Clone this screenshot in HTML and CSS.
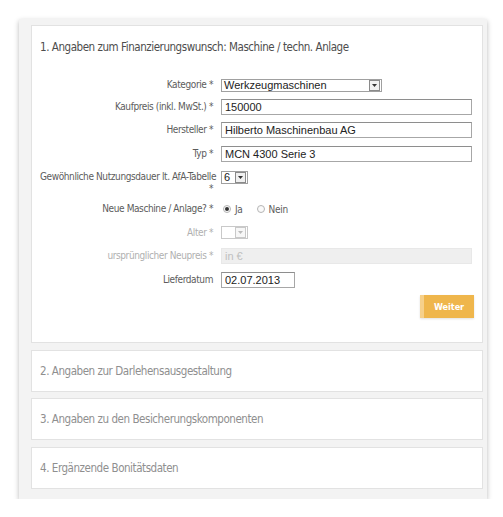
FILE: index.html
```html
<!DOCTYPE html>
<html lang="de">
<head>
    <meta charset="utf-8">
    <title>Finanzierungsanfrage</title>
    <link rel="stylesheet" href="styles.css">
</head>
<body>
    <div class="wizard">

        <div class="panel panel-open">
            <h2 class="panel-title">1. Angaben zum Finanzierungswunsch: Maschine / techn. Anlage</h2>

            <form class="form">
                <div class="row row-select">
                    <label class="label">Kategorie *</label>
                    <div class="ctrl">
                        <div class="select select-wide">
                            <span class="select-value">Werkzeugmaschinen</span>
                            <span class="select-btn"><svg width="5" height="3" viewBox="0 0 5 3"><path d="M0 0h5L2.5 3z" fill="#333"/></svg></span>
                        </div>
                    </div>
                </div>

                <div class="row">
                    <label class="label">Kaufpreis (inkl. MwSt.) *</label>
                    <div class="ctrl"><input class="input" type="text" value="150000"></div>
                </div>

                <div class="row">
                    <label class="label">Hersteller *</label>
                    <div class="ctrl"><input class="input" type="text" value="Hilberto Maschinenbau AG"></div>
                </div>

                <div class="row">
                    <label class="label">Typ *</label>
                    <div class="ctrl"><input class="input" type="text" value="MCN 4300 Serie 3"></div>
                </div>

                <div class="row row-tight">
                    <label class="label"><span class="nowrap">Gewöhnliche Nutzungsdauer lt. AfA-Tabelle</span> *</label>
                    <div class="ctrl">
                        <div class="select select-small">
                            <span class="select-value">6</span>
                            <span class="select-btn"><svg width="5" height="3" viewBox="0 0 5 3"><path d="M0 0h5L2.5 3z" fill="#333"/></svg></span>
                        </div>
                    </div>
                </div>

                <div class="row">
                    <label class="label">Neue Maschine / Anlage? *</label>
                    <div class="ctrl radios">
                        <span class="radio checked"></span><span class="radio-text">Ja</span>
                        <span class="radio"></span><span class="radio-text">Nein</span>
                    </div>
                </div>

                <div class="row">
                    <label class="label disabled">Alter *</label>
                    <div class="ctrl">
                        <div class="select select-small select-disabled">
                            <span class="select-value"></span>
                            <span class="select-btn"><svg width="5" height="3" viewBox="0 0 5 3"><path d="M0 0h5L2.5 3z" fill="#bbb"/></svg></span>
                        </div>
                    </div>
                </div>

                <div class="row">
                    <label class="label disabled">ursprünglicher Neupreis *</label>
                    <div class="ctrl"><input class="input input-disabled" type="text" placeholder="in €" disabled></div>
                </div>

                <div class="row">
                    <label class="label">Lieferdatum</label>
                    <div class="ctrl"><input class="input input-date" type="text" value="02.07.2013"></div>
                </div>

                <div class="actions">
                    <button class="btn" type="button">Weiter</button>
                </div>
            </form>
        </div>

        <div class="panel">
            <h2 class="panel-title muted">2. Angaben zur Darlehensausgestaltung</h2>
        </div>

        <div class="panel">
            <h2 class="panel-title muted">3. Angaben zu den Besicherungskomponenten</h2>
        </div>

        <div class="panel">
            <h2 class="panel-title muted">4. Ergänzende Bonitätsdaten</h2>
        </div>

    </div>
</body>
</html>
```

FILE: styles.css
```css
* {
    box-sizing: border-box;
}

body {
    margin: 0;
    background: #fff;
    font-family: "DejaVu Sans Condensed", "Liberation Sans", sans-serif;
    color: #555;
}

.wizard {
    width: 468px;
    margin: 19px 0 0 19px;
    padding: 6px 4px 10px 12px;
    background: #f3f3f3;
    box-shadow: 0 2px 5px rgba(0, 0, 0, 0.28);
}

.panel {
    background: #fff;
    border: 1px solid #e2e2e2;
    margin-bottom: 6.5px;
    height: 42px;
}

.panel:last-child {
    margin-bottom: 0;
}

.panel-open {
    height: auto;
    padding-bottom: 24px;
}

.panel-title {
    margin: 0;
    padding: 14px 8px 0;
    font-size: 11.5px;
    letter-spacing: -0.45px;
    line-height: 14px;
    font-weight: normal;
    color: #4d4d4d;
}

.panel-title.muted {
    padding-top: 13px;
    color: #8f8f8f;
}

.form {
    margin-top: 23px;
    padding-right: 10px;
}

.row {
    display: grid;
    grid-template-columns: 173px 1fr;
    column-gap: 8px;
    align-items: start;
    margin-bottom: 7.5px;
    margin-left: 8px;
}

.row-select {
    margin-bottom: 5.5px;
}

.row-tight {
    margin-bottom: 6px;
}

.label {
    font-size: 10px;
    letter-spacing: -0.4px;
    line-height: 12px;
    padding-top: 2px;
    text-align: right;
    color: #5c5c5c;
}

.label.disabled {
    color: #b0b0b0;
}

.nowrap {
    white-space: nowrap;
}

.ctrl {
    height: 16px;
    display: flex;
    align-items: center;
}

.input {
    width: 100%;
    height: 16px;
    border: 1px solid #a7a7a7;
    border-top-color: #8e8e8e;
    padding: 0 3px;
    font-family: "Liberation Sans", Arial, sans-serif;
    font-size: 11px;
    color: #222;
    background: #fff;
    outline: none;
}

.input-disabled {
    background: #efefef;
    border-color: #e8e8e8;
}

.input-disabled::placeholder {
    color: #c0c0c0;
}

.input-date {
    width: 74px;
}

.select {
    display: flex;
    align-items: center;
    height: 13px;
    border: 1px solid #a0a0a0;
    background: #fff;
    font-family: "Liberation Sans", Arial, sans-serif;
    font-size: 11px;
    color: #222;
}

.select-wide {
    width: 161px;
}

.select-small {
    width: 27px;
}

.select-value {
    flex: 1;
    padding-left: 2px;
    line-height: 11px;
}

.select-btn {
    width: 11px;
    height: 11px;
    margin-right: 1px;
    border: 1px solid #8a8a8a;
    background: #f0f0f0;
    display: flex;
    align-items: center;
    justify-content: center;
}

.select-disabled {
    border-color: #c9c9c9;
}

.select-disabled .select-btn {
    border-color: #c9c9c9;
    background: #f7f7f7;
}

.radios {
    font-size: 10px;
    letter-spacing: -0.3px;
    color: #5c5c5c;
}

.radio {
    width: 8px;
    height: 8px;
    border: 1px solid #b5b5b5;
    border-radius: 50%;
    background: #fafafa;
    margin: 0 4px 0 2px;
    display: inline-flex;
    align-items: center;
    justify-content: center;
}

.radio.checked::after {
    content: '';
    width: 4px;
    height: 4px;
    border-radius: 50%;
    background: #333;
}

.radio-text {
    margin-right: 12px;
}

.actions {
    display: flex;
    justify-content: flex-end;
    margin-top: 6.5px;
    margin-right: -2px;
}

.btn {
    width: 54px;
    height: 23px;
    border: none;
    border-left: 4px solid #f6d08a;
    background: #efb64c;
    color: #fff;
    font-family: "DejaVu Sans Condensed", "Liberation Sans", sans-serif;
    font-weight: bold;
    font-size: 9px;
    cursor: pointer;
    box-shadow: 0 1px 2px rgba(0, 0, 0, 0.12);
}
```
